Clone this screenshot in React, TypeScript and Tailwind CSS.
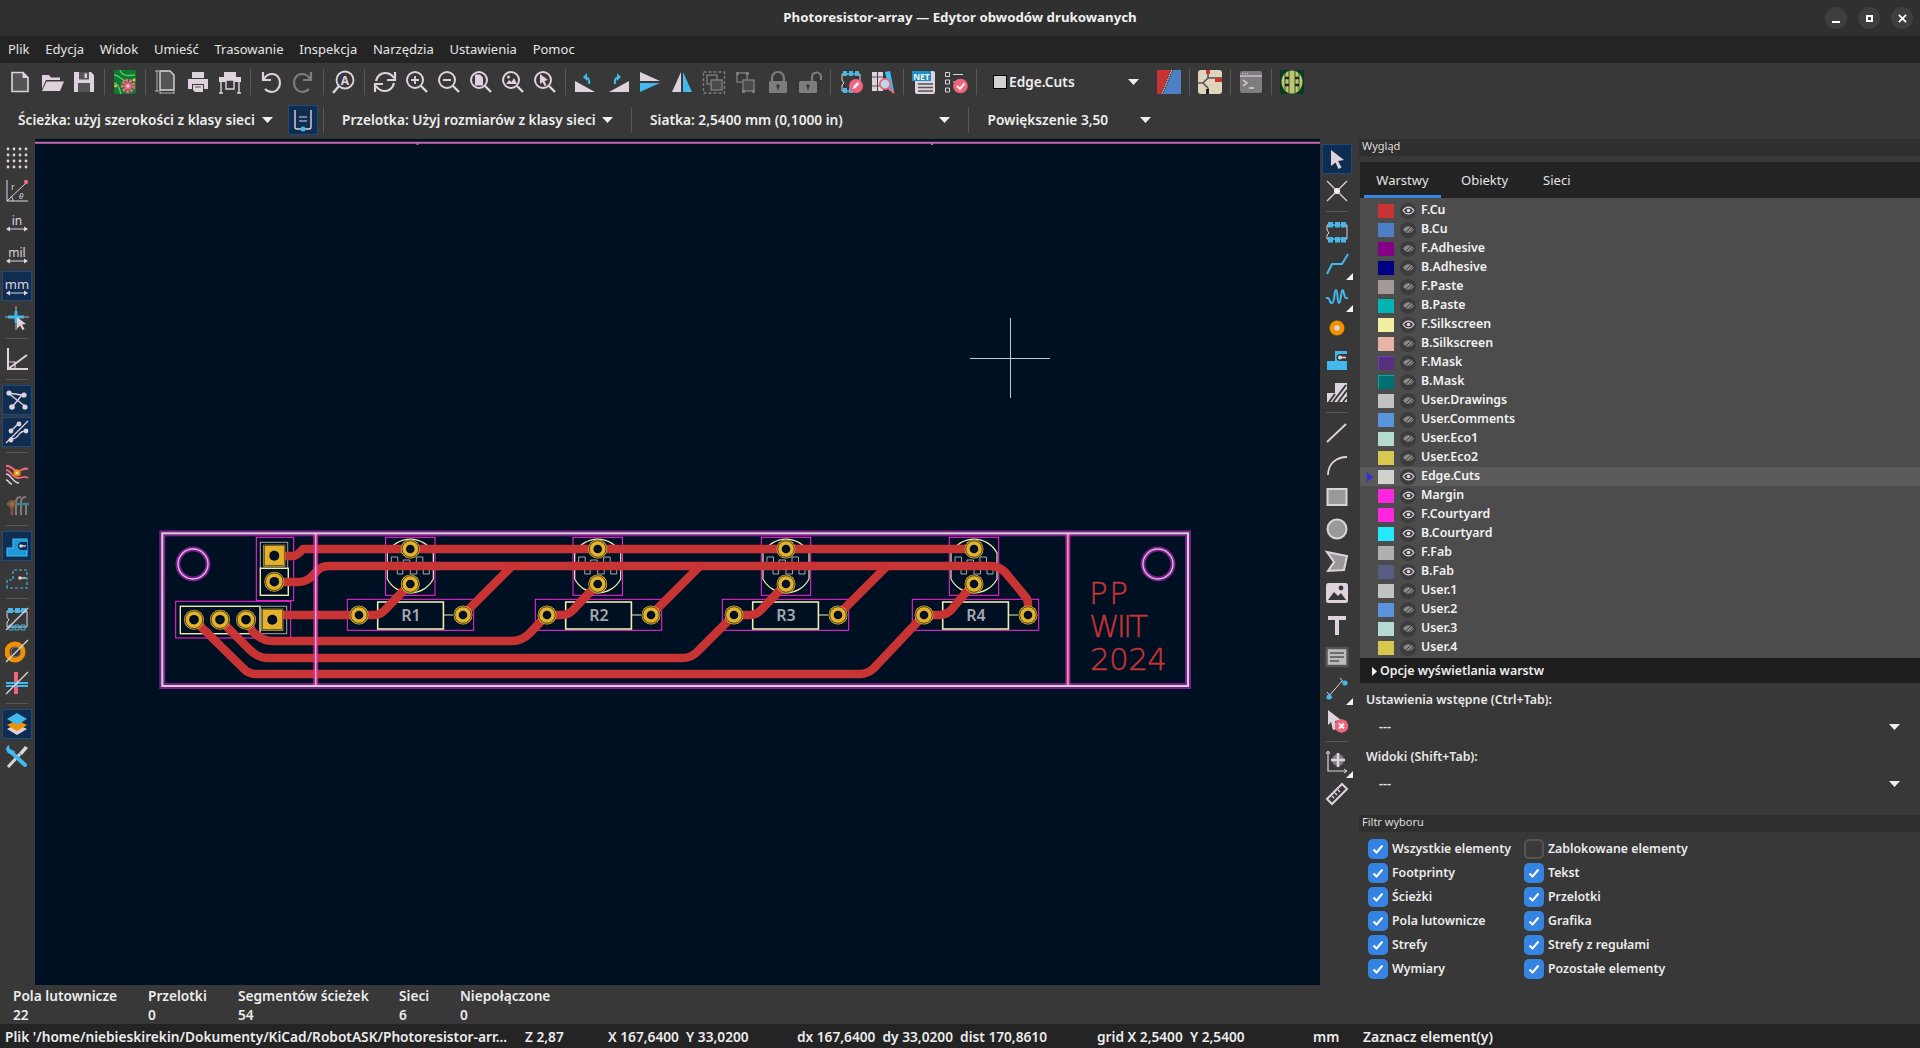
import type { ReactNode } from "react";

const L = "#ded3dd";
const B = "#42b8eb";
const R = "#f2647e";
const O = "#f29100";
const D = "#545454";
const G = "#7f7c80";

function Ic({ children }: { children: ReactNode }) {
  return (
    <svg viewBox="0 0 24 24" className="w-6 h-6" fill="none">
      {children}
    </svg>
  );
}

function Mag({ children, c = L }: { children?: ReactNode; c?: string }) {
  return (
    <Ic>
      <circle cx="10" cy="10" r="8" stroke={c} strokeWidth="2" />
      <path d="M16 16l6 6" stroke={c} strokeWidth="2.4" />
      {children}
    </Ic>
  );
}

function Btn({ children, active, tri }: { children: ReactNode; active?: boolean; tri?: boolean }) {
  return (
    <div className="relative w-8 h-8 flex items-center justify-center shrink-0">
      <div
        className={
          active
            ? "w-[30px] h-[30px] flex items-center justify-center border border-[#1f4a7d] bg-[#0f2d50]"
            : "w-[30px] h-[30px] flex items-center justify-center"
        }
      >
        {children}
      </div>
      {tri && (
        <svg viewBox="0 0 7 7" className="absolute right-0 bottom-0 w-[7px] h-[7px]">
          <path d="M7 0v7H0z" fill="#f2f2f2" />
        </svg>
      )}
    </div>
  );
}

function VSep() {
  return (
    <div className="w-[9px] h-8 flex items-center justify-center shrink-0">
      <div className="w-px h-[26px] bg-[#585858]" />
    </div>
  );
}

function HSep() {
  return (
    <div className="w-8 h-[9px] flex items-center justify-center shrink-0">
      <div className="h-px w-[22px] bg-[#585858]" />
    </div>
  );
}

function Caret() {
  return (
    <svg viewBox="0 0 11 6" className="w-[11px] h-[6px] shrink-0">
      <path d="M0 0h11L5.5 6z" fill="#f0f0f0" />
    </svg>
  );
}

/* ---------- top toolbar icons ---------- */
const IconNew = () => (
  <Ic>
    <path d="M4 2.5h11l5 5v14H4z" fill={D} stroke={L} strokeWidth="1.6" />
    <path d="M15 2.5v5h5" fill={L} stroke={L} strokeWidth="1" />
  </Ic>
);
const IconOpen = () => (
  <Ic>
    <path d="M2 19V5h7l2 2.5h9V10H6z" fill={L} />
    <path d="M6.5 11.5H24L20 21H2z" fill={L} />
  </Ic>
);
const IconSave = () => (
  <Ic>
    <path d="M2 2h17l3 3v17H2z" fill={L} />
    <rect x="7" y="2" width="10" height="7.5" fill={D} />
    <rect x="12.5" y="3.5" width="2.5" height="4.5" fill={L} />
    <rect x="6" y="13" width="12" height="9" fill={D} />
  </Ic>
);
const IconPcb = () => (
  <Ic>
    <rect x="1" y="0" width="22" height="24" rx="2" fill="#0e7a2e" />
    <path d="M1 5c6 0 7 6 13 6M7 0c2 6 7 6 15 5M1 13c4 0 5 5 7 11" stroke="#5cc46a" strokeWidth="1.4" />
    <circle cx="15" cy="16" r="5.5" fill="none" stroke={R} strokeWidth="3.4" strokeDasharray="2.6 1.2" />
    <circle cx="15" cy="16" r="3.6" fill={R} />
    <circle cx="15" cy="16" r="1.6" fill="#e8d8e0" />
    <circle cx="2.5" cy="16" r="1.4" fill="#e8c94c" />
    <circle cx="21" cy="10" r="1.4" fill="#e8c94c" />
  </Ic>
);
const IconPage = () => (
  <Ic>
    <path d="M1 1h4M1 21h4M3 1v20M6 23h14M6 21v3M20 21v3" stroke={L} strokeWidth="0.8" />
    <path d="M6 1h10l4 4v15H6z" fill={D} stroke={L} strokeWidth="1.4" />
  </Ic>
);
const IconPrint = () => (
  <Ic>
    <path d="M6 2h12v6H6z" fill={L} />
    <path d="M2 9h20v10h-4v-5H6v5H2z" fill={L} />
    <path d="M7 15h10v7H9l-2-2z" fill={L} />
    <path d="M9 17h6" stroke={D} strokeWidth="1" />
  </Ic>
);
const IconPlot = () => (
  <Ic>
    <path d="M6 2h12v5H6zM1 7h22v5H1z" fill={L} />
    <path d="M3 12v11M21 12v11M1 23h4M19 23h4" stroke={L} strokeWidth="1.4" />
    <path d="M8 10h8v9H8z" fill="#383838" stroke={L} strokeWidth="1.4" />
  </Ic>
);
const IconUndo = ({ c = L, flip }: { c?: string; flip?: boolean }) => (
  <Ic>
    <g transform={flip ? "matrix(-1 0 0 1 24 0)" : undefined} stroke={c} strokeWidth="2.2">
      <path d="M5 9c2-4 5-5 8-5 5 0 8 4 8 9s-4 9-8 9c-3 0-5-1-7-3" />
      <path d="M4 2v8h8" />
    </g>
  </Ic>
);
const IconFind = () => (
  <Ic>
    <circle cx="13" cy="10" r="8.5" stroke={L} strokeWidth="1.8" />
    <path d="M7 16L1 23" stroke={L} strokeWidth="2.4" />
    <text x="13" y="14.5" textAnchor="middle" fontSize="12" fontWeight="700" fill={L} fontFamily="Noto Sans">A</text>
  </Ic>
);
const IconRefresh = () => (
  <Ic>
    <path d="M3 11C4 6 8 3 12 3c4 0 7 2 9 5" stroke={L} strokeWidth="2.2" />
    <path d="M22 2v8h-8" stroke={L} strokeWidth="2.2" />
    <path d="M21 13c-1 5-5 8-9 8-4 0-7-2-9-5" stroke={L} strokeWidth="2.2" />
    <path d="M2 22v-8h8" stroke={L} strokeWidth="2.2" />
  </Ic>
);
const IconZoomIn = () => (
  <Mag>
    <path d="M6 10h8M10 6v8" stroke={L} strokeWidth="1.8" />
  </Mag>
);
const IconZoomOut = () => (
  <Mag>
    <path d="M6 10h8" stroke={L} strokeWidth="2" />
  </Mag>
);
const IconZoomFit = () => (
  <Mag>
    <path d="M6 4.5h5l3 3v8H6z" fill={L} />
  </Mag>
);
const IconZoomObj = () => (
  <Mag>
    <path d="M5 14l3-4 2.5 2L13 8l3 6z" fill={L} />
    <circle cx="7.5" cy="7" r="1.5" fill={L} />
  </Mag>
);
const IconZoomSel = () => (
  <Mag>
    <path d="M7 4l8 6-3.5 1 2 4-2 1-2-4L7 14z" fill={L} />
  </Mag>
);
const IconFlipL = () => (
  <Ic>
    <path d="M1 22V11l20 11z" fill={L} />
    <path d="M15 14c1-4-1-7-4-7" stroke={B} strokeWidth="2.2" />
    <path d="M13 3l-4 4 4 4z" fill={B} />
  </Ic>
);
const IconFlipR = () => (
  <Ic>
    <path d="M23 22V11L3 22z" fill={L} />
    <path d="M9 14c-1-4 1-7 4-7" stroke={B} strokeWidth="2.2" />
    <path d="M11 3l4 4-4 4z" fill={B} />
  </Ic>
);
const IconFlipV = () => (
  <Ic>
    <path d="M2 2l20 9H2z" fill={L} />
    <path d="M2 13h20L2 22z" fill={B} />
  </Ic>
);
const IconMirror = () => (
  <Ic>
    <path d="M11 2v20H2z" fill={L} />
    <path d="M13 2v20h9z" fill={B} />
  </Ic>
);
const IconGroup = () => (
  <Ic>
    <rect x="1.5" y="2" width="21" height="21" stroke={G} strokeWidth="1.4" strokeDasharray="3 2" />
    <rect x="5" y="5" width="10" height="9" stroke={G} strokeWidth="1.4" />
    <rect x="9" y="10" width="11" height="10" fill="#4a4a4a" stroke={G} strokeWidth="1.4" />
  </Ic>
);
const IconUngroup = () => (
  <Ic>
    <rect x="3" y="3" width="10" height="9" stroke={G} strokeWidth="1.4" />
    <rect x="9" y="10" width="11" height="11" fill="#4a4a4a" stroke={G} strokeWidth="1.4" />
    <path d="M2 2h3v3H2zM12 2h3v3h-3zM18 20h3v3h-3zM8 20h3v3H8z" fill={G} />
  </Ic>
);
const IconLock = () => (
  <Ic>
    <path d="M6 12V8a6 6 0 0 1 12 0v4" stroke={G} strokeWidth="2.2" />
    <rect x="3" y="11" width="18" height="12" rx="1.5" fill={G} />
    <circle cx="12" cy="16" r="1.8" fill="#3a3a3a" />
    <path d="M12 16v4" stroke="#3a3a3a" strokeWidth="1.4" />
  </Ic>
);
const IconUnlock = () => (
  <Ic>
    <path d="M14 12V7a4.5 4.5 0 0 1 9 0v3" stroke={G} strokeWidth="2.2" />
    <rect x="1" y="11" width="18" height="12" rx="1.5" fill={G} />
    <circle cx="10" cy="16" r="1.8" fill="#3a3a3a" />
    <path d="M10 16v4" stroke="#3a3a3a" strokeWidth="1.4" />
  </Ic>
);
const IconFpEdit = () => (
  <Ic>
    <path d="M3 4h18v17H3v-6l2-2-2-3z" stroke={L} strokeWidth="1" />
    <path d="M4 1h4v5H4zM10 1h4v5h-4zM16 1h4v5h-4zM4 18h4v5H4zM10 18h4v5h-4z" fill={B} />
    <circle cx="17" cy="16" r="7" fill={R} />
    <path d="M13.5 19l1-3 4-4 2 2-4 4z" fill="#f4f0f2" />
  </Ic>
);
const IconLib = () => (
  <Ic>
    <rect x="1" y="2" width="5" height="19" fill={L} />
    <rect x="7" y="2" width="5" height="19" fill={L} />
    <path d="M1 7h11M1 16h11" stroke={D} strokeWidth="1" />
    <path d="M14 2l5-1 4 20h-5z" fill={B} />
    <circle cx="14" cy="14" r="5.2" fill="#b8dbe8" stroke={R} strokeWidth="1.8" />
    <path d="M18 18l5 5" stroke={R} strokeWidth="2.4" />
  </Ic>
);
const IconNet = () => (
  <Ic>
    <rect x="3" y="1" width="20" height="23" rx="2" fill={L} />
    <rect x="0" y="1" width="19" height="10" fill="#1d8fc4" />
    <text x="9.5" y="9.5" textAnchor="middle" fontSize="8.5" fontWeight="700" fill="#f4f4f4" fontFamily="Noto Sans">NET</text>
    <path d="M6 14h15M6 17.5h15M6 21h15" stroke={D} strokeWidth="1.6" />
  </Ic>
);
const IconCheck = () => (
  <Ic>
    <path d="M1.5 2.5h4v4h-4zM1.5 10h4v4h-4zM1.5 18h4v4h-4z" stroke={L} strokeWidth="1" />
    <path d="M9 4.5h10M9 12h5" stroke={L} strokeWidth="1.2" />
    <circle cx="16.5" cy="16" r="7.3" fill={R} />
    <path d="M13 16l3 3 4.5-5.5" stroke="#f6f2f4" strokeWidth="2" />
  </Ic>
);
const IconLayerPair = () => (
  <Ic>
    <path d="M0 0h14L4 24H0z" fill="#c83434" />
    <path d="M16 0h8v24H6z" fill="#4d7fc4" />
    <path d="M14.8 0L5 24" stroke="#f0f0f0" strokeWidth="1" strokeDasharray="1.6 0.8" />
  </Ic>
);
const IconSchem = () => (
  <Ic>
    <rect x="0" y="0" width="24" height="24" rx="3" fill="#e0d4bd" />
    <path d="M10 0v8M10 8L5 13l5 5M10 18v6M5 13h-5M10 8l14 0" stroke="#545454" strokeWidth="1.6" />
    <path d="M8 0h4v4H8zM17 8h7v4h-7z" fill="#c83434" />
    <path d="M8 19h3v5H8z" fill="#222" />
  </Ic>
);
const IconTerm = () => (
  <Ic>
    <rect x="1" y="1" width="22" height="22" rx="2" fill={G} />
    <path d="M1 6h22" stroke={L} strokeWidth="1.2" />
    <path d="M3 3.5h1M5.5 3.5h1M8 3.5h1" stroke={L} strokeWidth="1" />
    <path d="M4 10l4 3-4 3M10 18h5" stroke={L} strokeWidth="1.4" />
  </Ic>
);
const Icon3D = () => (
  <Ic>
    <rect x="0" y="0" width="24" height="24" fill="#0b3a22" />
    <ellipse cx="12" cy="12" rx="10.5" ry="11.5" fill="#c8c06c" />
    <path d="M5 3v18M9 1v22M15 1v22M19 3v18" stroke="#0b6a3a" strokeWidth="1" />
    <path d="M5 8h4M15 8h4M5 15h4M15 15h4" stroke="#222" strokeWidth="2.4" />
  </Ic>
);

/* ---------- left toolbar icons ---------- */
const IconGrid = () => (
  <Ic>
    {[3, 9, 15, 21].map((y) =>
      [3, 9, 15, 21].map((x) => <circle key={`${x}-${y}`} cx={x} cy={y} r="1.4" fill={L} />)
    )}
  </Ic>
);
const IconPolar = () => (
  <Ic>
    <path d="M2 23V2M2 23h21M2 23L21 5" stroke={L} strokeWidth="1" />
    <path d="M6 18c1 1 2 3 2 5" stroke={L} strokeWidth="1" />
    <circle cx="21" cy="4" r="2.2" fill={R} />
    <text x="6" y="12" fontSize="9" fill={L} fontFamily="Noto Sans">r</text>
    <text x="14" y="21" fontSize="8" fontStyle="italic" fill={L} fontFamily="Noto Sans">θ</text>
  </Ic>
);
const Unit = ({ t, s = 12 }: { t: string; s?: number }) => (
  <Ic>
    <text x="12" y="14.5" textAnchor="middle" fontSize={s} fill={L} fontFamily="Noto Sans">{t}</text>
    <path d="M2 19h20" stroke={L} strokeWidth="1" />
    <path d="M1 19l4-2.4v4.8zM23 19l-4-2.4v4.8z" fill={L} />
  </Ic>
);
const IconCursor = () => (
  <Ic>
    <path d="M0 11h24M11 0v24" stroke={L} strokeWidth="0.8" />
    <path d="M3 11h16M11 5v12" stroke={B} strokeWidth="2.8" />
    <path d="M12 11l9 7-4 .6 2.5 4.5-2 1-2.4-4.6L12 23z" fill={L} />
  </Ic>
);
const IconOrigin = () => (
  <Ic>
    <path d="M3 1v21h20" stroke={L} strokeWidth="2" />
    <path d="M3 22L22 8" stroke={L} strokeWidth="2" />
    <path d="M3 15h7v7" stroke={L} strokeWidth="1.2" />
  </Ic>
);
const IconRats = () => (
  <Ic>
    <path d="M3 5l14 2M3 5l18 14M17 7L7 19" stroke={L} strokeWidth="1.4" />
    <circle cx="4" cy="5" r="2.6" fill={L} />
    <circle cx="19" cy="7" r="2.6" fill={L} />
    <circle cx="7" cy="19" r="2.8" fill={L} />
    <circle cx="20" cy="19" r="2.6" fill={L} />
  </Ic>
);
const IconCurved = () => (
  <Ic>
    <path d="M6 19c10 0 5-8 15-8" stroke={L} strokeWidth="1.4" />
    <path d="M14 3L5 12" stroke={L} strokeWidth="1.4" />
    <path d="M1 23L23 1" stroke={L} strokeWidth="1.2" />
    <circle cx="14" cy="4" r="2.4" fill={L} />
    <circle cx="6" cy="11" r="2.4" fill={L} />
    <circle cx="21" cy="11" r="2.4" fill={L} />
    <circle cx="6" cy="20" r="2.4" fill={L} />
  </Ic>
);
const IconNetMode = () => (
  <Ic>
    <path d="M1 5c6-1 6 5 12 5 4 0 6-4 10-2" stroke={R} strokeWidth="2.2" />
    <path d="M1 9c5 0 6 8 12 8 4 0 6-3 10 0" stroke={R} strokeWidth="1.8" />
    <path d="M1 13c5 0 7 9 13 9M1 19c3 0 3 4 6 4" stroke={L} strokeWidth="1.4" />
    <circle cx="12" cy="12" r="3.6" fill={O} />
    <circle cx="12" cy="12" r="1.4" fill={L} />
  </Ic>
);
const IconViaMode = () => (
  <Ic>
    <path d="M11 22V9c0-3 2-5 5-5M16 22V9c0-3 2-5 5-5" stroke={G} strokeWidth="2" />
    <path d="M21 22V10" stroke={G} strokeWidth="2" />
    <path d="M7 22V11" stroke="#8a4a44" strokeWidth="3" />
    <path d="M2 11h22" stroke="#3f7f9a" strokeWidth="2.4" />
    <circle cx="7" cy="11" r="4" fill="#8a5a2c" />
    <circle cx="7" cy="11" r="1.6" fill={G} />
  </Ic>
);
const IconZone = () => (
  <Ic>
    <path d="M2 22v-8h6V5h14v17z" fill="#1f9ad6" stroke={B} strokeWidth="1.2" />
    <path d="M22 8h-5a3.5 3.5 0 0 0 0 8h5z" fill="#0f2d50" />
    <circle cx="16" cy="12" r="1.8" fill={L} />
    <path d="M16 12h5" stroke={L} strokeWidth="1.4" />
  </Ic>
);
const IconZoneOutline = () => (
  <Ic>
    <path d="M2 22v-8h6V4h14v18z" stroke={B} strokeWidth="1.2" strokeDasharray="3 2" />
    <circle cx="15" cy="12" r="1.8" fill={L} />
    <path d="M15 12h6" stroke={L} strokeWidth="1.4" />
  </Ic>
);
const IconFpText = () => (
  <Ic>
    <path d="M2 4h20v16H2v-5l2-2-2-3z" stroke={L} strokeWidth="1" />
    <path d="M3 1h5v5H3zM10 1h5v5h-5zM16 1h5v5h-5z" fill={B} />
    <path d="M4 18h4v5H4zM10 18h4v5h-4zM16 18h4v5h-4z" stroke={B} strokeWidth="1" />
    <path d="M1 23L23 1" stroke={L} strokeWidth="1.2" />
  </Ic>
);
const IconViaHide = () => (
  <Ic>
    <circle cx="10" cy="13" r="8" stroke={O} strokeWidth="5" />
    <circle cx="11" cy="13" r="5" stroke={G} strokeWidth="1" />
    <path d="M1 23L23 1" stroke={L} strokeWidth="1.2" />
  </Ic>
);
const IconTrackHide = () => (
  <Ic>
    <path d="M11 1v22" stroke={R} strokeWidth="4" />
    <path d="M1 12h22M1 15h22" stroke={B} strokeWidth="2" />
    <path d="M1 23L23 1" stroke={L} strokeWidth="1.2" />
  </Ic>
);
const IconLayers = () => (
  <Ic>
    <path d="M12 12l10 5-10 6-10-6z" fill={L} />
    <path d="M12 8l10 5-10 6-10-6z" fill={O} />
    <path d="M12 1l10 6-10 6L2 7z" fill={B} />
  </Ic>
);
const IconTools = () => (
  <Ic>
    <path d="M3 23L15 10" stroke={L} strokeWidth="3" />
    <path d="M14 9l6-7 3 2-6 7z" fill={L} />
    <path d="M5 7l15 14" stroke={B} strokeWidth="4" strokeLinecap="round" />
    <path d="M4 1a5.5 5.5 0 0 0-3 4 6 6 0 0 0 8 5l1-3-5-1z" fill={B} />
  </Ic>
);

/* ---------- right toolbar icons ---------- */
const IconPointer = () => (
  <Ic>
    <path d="M6 3l13 10-6 1 3.5 6.5-3 1.5-3-6.5L6 19z" fill={L} />
  </Ic>
);
const IconPin = () => (
  <Ic>
    <path d="M2 2l20 20M22 2L2 22" stroke={L} strokeWidth="1.2" />
    <circle cx="12" cy="12" r="3" fill="#f4f0f2" />
  </Ic>
);
const IconFootprint = () => (
  <Ic>
    <path d="M2 5h20v14H2v-4l2-2-2-3z" stroke={L} strokeWidth="1" />
    <path d="M3 2h5v5.5H3zM10 2h5v5.5h-5zM16 2h5v5.5h-5zM3 17h5v5.5H3zM10 17h5v5.5h-5zM16 17h5v5.5h-5z" fill={B} />
  </Ic>
);
const IconRoute = () => (
  <Ic>
    <path d="M2 22l5-10h10l6-10" stroke={B} strokeWidth="2" />
  </Ic>
);
const IconTune = () => (
  <Ic>
    <path d="M1 14h2c2 0 1 5 4 5s2-13 4-13 1 13 3 13 2-13 3.5-13S19 14 21 14h2" stroke={B} strokeWidth="2" />
  </Ic>
);
const IconVia = () => (
  <Ic>
    <circle cx="12" cy="12" r="7.5" fill={O} />
    <circle cx="12" cy="12" r="2.8" fill={L} />
  </Ic>
);
const IconZoneSolid = () => (
  <Ic>
    <path d="M2 22v-9h8V3h12v19z" fill={B} />
    <path d="M22 6h-7a3.5 3.5 0 0 0 0 7h7z" fill="#383838" />
    <circle cx="15" cy="9.5" r="2" fill={L} />
    <path d="M15 9.5h6" stroke={L} strokeWidth="1.6" />
  </Ic>
);
const IconRule = () => (
  <Ic>
    <path d="M2 22v-9h8V3h12v19z" fill={L} />
    <path d="M4 22l6-8M8 22l13-17M13 22l9-12M18 22l4-5" stroke="#383838" strokeWidth="2" />
  </Ic>
);
const IconLine = () => (
  <Ic>
    <path d="M2 21L21 3" stroke={L} strokeWidth="1.8" />
  </Ic>
);
const IconArc = () => (
  <Ic>
    <path d="M3 22C3 11 11 4 22 4" stroke={L} strokeWidth="1.8" />
  </Ic>
);
const IconRect = () => (
  <Ic>
    <rect x="2.5" y="4" width="19" height="16" fill="#999" stroke={L} strokeWidth="2" />
  </Ic>
);
const IconCircle = () => (
  <Ic>
    <circle cx="12" cy="12" r="9.5" fill="#999" stroke={L} strokeWidth="2" />
  </Ic>
);
const IconPoly = () => (
  <Ic>
    <path d="M2 3l20 4-3 14-16 1 6-9z" fill="#999" stroke={L} strokeWidth="2" />
  </Ic>
);
const IconImage = () => (
  <Ic>
    <rect x="1" y="2" width="22" height="20" rx="2.5" fill={L} />
    <path d="M3 19l6-8 4 4 3-3 5 7z" fill="#383838" />
    <circle cx="16" cy="7" r="2.4" fill="#383838" />
  </Ic>
);
const IconT = () => (
  <Ic>
    <path d="M3 3h18v4h-7v15h-4V7H3z" fill={L} />
  </Ic>
);
const IconTextBox = () => (
  <Ic>
    <rect x="1.5" y="3" width="21" height="18" fill="#bbb" stroke={D} strokeWidth="2.4" />
    <path d="M5 8h14M5 12h14M5 16h9" stroke={D} strokeWidth="1.4" />
  </Ic>
);
const IconDim = () => (
  <Ic>
    <path d="M4 19L17 4M2 15l5 6M15 1l5 6" stroke={L} strokeWidth="1" />
    <circle cx="20" cy="6" r="2.6" fill={B} />
    <circle cx="4" cy="20" r="2.6" fill={B} />
  </Ic>
);
const IconDelete = () => (
  <Ic>
    <path d="M3 1l13 10-6 1 2 8-4 1-2-8-3 3z" fill={L} />
    <circle cx="16.5" cy="17" r="6.8" fill={R} />
    <path d="M14 14.5l5 5M19 14.5l-5 5" stroke="#f6f2f4" strokeWidth="2" />
  </Ic>
);
const IconOrigin2 = () => (
  <Ic>
    <path d="M3 1v20h19" stroke={L} strokeWidth="1.2" />
    <path d="M1 4l2-3 2 3M19 19l3 2-3 2" stroke={L} strokeWidth="1" />
    <circle cx="13" cy="10" r="6" fill={G} />
    <path d="M6 10h14M13 3v14" stroke={L} strokeWidth="2.6" />
  </Ic>
);
const IconMeasure = () => (
  <Ic>
    <path d="M2 17L17 2l5 5L7 22z" stroke={L} strokeWidth="2" />
    <path d="M7 14l2 2M10 11l2 2M13 8l2 2" stroke={L} strokeWidth="1.4" />
  </Ic>
);

/* ---------- PCB ---------- */
const GOLD = "#e3b12c";
const BG = "#001023";
const TRACK = "#c83434";
const SILK = "#efebb4";
const COURT = "#ff26e2";

function Pad({ x, y, r = 10 }: { x: number; y: number; r?: number }) {
  return (
    <g>
      <circle cx={x} cy={y} r={r} fill={GOLD} />
      <circle cx={x} cy={y} r={r - 1.2} fill="none" stroke={BG} strokeWidth="0.7" />
      <circle cx={x} cy={y} r={r - 5.2} fill={BG} />
    </g>
  );
}

function SquarePad({ x, y }: { x: number; y: number }) {
  return (
    <g>
      <rect x={x - 11} y={y - 11} width="22" height="22" fill={GOLD} />
      <rect x={x - 10} y={y - 10} width="20" height="20" fill="none" stroke={BG} strokeWidth="0.5" />
      <circle cx={x} cy={y} r="5" fill={BG} />
    </g>
  );
}

function Resistor({ x, name }: { x: number; name: string }) {
  return (
    <g>
      <rect x={x - 11.7} y="599.3" width="126.4" height="31" stroke={COURT} strokeWidth="1" />
      <path d={`M${x + 84} 615h10`} stroke={SILK} strokeWidth="1" />
      <rect x={x + 18.7} y="602" width="65.7" height="27" stroke={SILK} strokeWidth="1.6" />
      <text x={x + 52} y="620.5" textAnchor="middle" fontSize="16" fontWeight="600" fill="#a4a8ae" fontFamily="Noto Sans">
        {name}
      </text>
    </g>
  );
}

function Sensor({ x }: { x: number }) {
  return (
    <g transform={`translate(${x} 549)`}>
      <rect x="-24.7" y="-11.7" width="49.4" height="58" stroke={COURT} strokeWidth="1" />
      <path d="M-23 4A26 26 0 0 1 23 4V30A26 26 0 0 1-23 30Z" stroke={SILK} strokeWidth="1.2" />
      <path
        d="M-19 8h6.5v10M-19 8v10M-13 25v-7h5.500v7M-7 11h6.5v7h-6.5zM0 25v-7h6.5v7M6 8h6.5v10h-6.5zM13 25v-7h6v7h-6M-13 25h5.500M0 25h6.5"
        stroke="#a4a8ae"
        strokeWidth="1"
      />
    </g>
  );
}

function Board() {
  const tracks = [
    "M274 556H293Q297 556 303 549H974",
    "M274 582H298Q305 582 310 578L318 570Q322 566 330 566H990Q999 566 1005 572L1024 595Q1028 599 1028 604V615",
    "M463 615L512 566",
    "M651 615L700 566",
    "M838 615L887 566",
    "M359 615H374Q380 615 385 610L404 590L410 584",
    "M547 615H562Q568 615 573 610L592 590L598 584",
    "M734 615H750Q756 615 761 610L780 590L786 584",
    "M924 615H940Q946 615 951 610L968 590L974 584",
    "M272 615H359",
    "M246 620L253 632Q262 641 272 641H512Q522 641 530 633L547 615",
    "M220 620L249 649Q258 658 268 658H683Q692 658 699 650L734 615",
    "M194 620L243 668Q248 674 256 674H860Q868 674 874 668L924 615",
  ];
  return (
    <svg viewBox="35 139 1285 846" className="w-full h-full block" fill="none">
      <path d="M35 142.8H1320M417.5 142v3M932 142v3" stroke="#c568ad" strokeWidth="2" />
      {/* mask layer under the outline */}
      <rect x="162.3" y="533.3" width="1025.7" height="152.7" stroke="#7c1f8c" strokeWidth="6" />
      <circle cx="193" cy="564" r="15" stroke="#7c1f8c" strokeWidth="5" />
      <circle cx="1158" cy="564" r="15" stroke="#7c1f8c" strokeWidth="5" />
      <Resistor x={359} name="R1" />
      <Resistor x={547} name="R2" />
      <Resistor x={734} name="R3" />
      <Resistor x={924} name="R4" />
      <Sensor x={410.3} />
      <Sensor x={597.7} />
      <Sensor x={786} />
      <Sensor x={974} />
      {/* connectors */}
      <rect x="256.3" y="537.3" width="37.4" height="63.4" stroke={COURT} strokeWidth="1" />
      <rect x="260.3" y="542.3" width="27.4" height="26" stroke="#a4a8ae" strokeWidth="1" />
      <rect x="260.3" y="568.3" width="28" height="27" stroke={SILK} strokeWidth="1.4" />
      <rect x="175.7" y="601.3" width="115" height="36.7" stroke={COURT} strokeWidth="1" />
      <rect x="180.3" y="606.3" width="79.7" height="27.4" stroke={SILK} strokeWidth="1.4" />
      <rect x="260" y="606.3" width="26.7" height="27.4" stroke="#a4a8ae" strokeWidth="1" />
      {tracks.map((d) => (
        <path key={d} d={d} stroke={TRACK} strokeWidth="8.4" strokeLinejoin="round" strokeLinecap="round" />
      ))}
      {/* edge cuts */}
      <path d="M315.7 533V686M1067.9 533V686" stroke="#e22f9c" strokeOpacity="0.75" strokeWidth="5" />
      <path d="M315.7 533V686M1067.9 533V686" stroke="#e9a8d8" strokeWidth="1.4" />
      <rect x="162.3" y="533.3" width="1025.7" height="152.7" stroke="#d0d2cd" strokeWidth="2" />
      <circle cx="193" cy="564" r="15" stroke="#d8b8d8" strokeWidth="1.4" />
      <circle cx="1158" cy="564" r="15" stroke="#d8b8d8" strokeWidth="1.4" />
      {/* pads */}
      <SquarePad x={274.3} y={555.7} />
      <Pad x={274.3} y={581.7} />
      <SquarePad x={272.3} y={619.7} />
      <Pad x={246} y={619.7} />
      <Pad x={220} y={619.7} />
      <Pad x={194} y={619.7} />
      {[410.3, 597.7, 786, 974].map((x) => (
        <g key={x}>
          <Pad x={x} y={549} r={9.5} />
          <Pad x={x} y={584} r={9.5} />
        </g>
      ))}
      {[359, 463, 547, 651, 734, 838, 924, 1028].map((x) => (
        <Pad key={x} x={x} y={615} r={9.5} />
      ))}
      {/* board label */}
      <g fill={TRACK} stroke={TRACK} strokeWidth="0.4" fontFamily="DejaVu Sans" fontWeight="200" fontSize="31">
        <text x="1089" y="603.5" textLength="39" lengthAdjust="spacing">PP</text>
        <text x="1089" y="636.7" textLength="59" lengthAdjust="spacing">WIIT</text>
        <text x="1090" y="670" textLength="77" lengthAdjust="spacing">2024</text>
      </g>
      {/* cursor */}
      <path d="M970 358.5H1050M1010.5 318V398" stroke="#c8c8c8" strokeWidth="1" />
    </svg>
  );
}

/* ---------- right panel ---------- */
const layers: [string, string, boolean][] = [
  ["F.Cu", "#c83434", true],
  ["B.Cu", "#4d7fc4", false],
  ["F.Adhesive", "#840084", false],
  ["B.Adhesive", "#000084", false],
  ["F.Paste", "#a39a95", false],
  ["B.Paste", "#00b4b4", false],
  ["F.Silkscreen", "#f2eda1", true],
  ["B.Silkscreen", "#e8b2a7", false],
  ["F.Mask", "#54307f", false],
  ["B.Mask", "#006f73", false],
  ["User.Drawings", "#c2c2c2", false],
  ["User.Comments", "#5994dc", false],
  ["User.Eco1", "#b4dbd2", false],
  ["User.Eco2", "#d8c852", false],
  ["Edge.Cuts", "#d0d2cd", true],
  ["Margin", "#ff26e2", true],
  ["F.Courtyard", "#ff26e2", true],
  ["B.Courtyard", "#26e9ff", true],
  ["F.Fab", "#afafaf", true],
  ["B.Fab", "#585d84", true],
  ["User.1", "#c2c2c2", false],
  ["User.2", "#5994dc", false],
  ["User.3", "#b4dbd2", false],
  ["User.4", "#d8c852", false],
];

function Eye({ on }: { on: boolean }) {
  return (
    <div className="w-4 h-4 rounded-full bg-[#3c3c3c] flex items-center justify-center">
      <svg viewBox="0 0 14 10" className="w-[13px] h-[9px]" fill="none">
        {on ? (
          <g>
            <path d="M1 5c3-5 9-5 12 0-3 5-9 5-12 0z" stroke="#ded3dd" strokeWidth="1.2" />
            <circle cx="7" cy="5" r="2" fill="#ded3dd" />
          </g>
        ) : (
          <g>
            <path d="M1 5c3-5 9-5 12 0-3 5-9 5-12 0z" fill="#8a8a8a" />
            <path d="M2 10l9-9M6 10l7-7" stroke="#3c3c3c" strokeWidth="1.1" />
          </g>
        )}
      </svg>
    </div>
  );
}

function Check({ label, on = true }: { label: string; on?: boolean }) {
  return (
    <div className="flex items-center h-6">
      <div
        className={
          on
            ? "w-5 h-5 rounded-[5px] bg-[#3584e4] flex items-center justify-center"
            : "w-5 h-5 rounded-[5px] border-2 border-[#555] bg-[#3a3a3a]"
        }
      >
        {on && (
          <svg viewBox="0 0 14 14" className="w-[14px] h-[14px]" fill="none">
            <path d="M2.5 7.5l3 3 6-7" stroke="#fff" strokeWidth="2" />
          </svg>
        )}
      </div>
      <span className="ml-1 text-[12.3px] font-semibold text-[#ececec] whitespace-nowrap">{label}</span>
    </div>
  );
}

function Combo({ w, ml, text }: { w: string; ml: string; text: string }) {
  return (
    <div className={`${w} ${ml} flex items-center justify-between shrink-0`}>
      <span className="whitespace-nowrap">{text}</span>
      <Caret />
    </div>
  );
}

export default function App() {
  const menus = ["Plik", "Edycja", "Widok", "Umieść", "Trasowanie", "Inspekcja", "Narzędzia", "Ustawienia", "Pomoc"];
  const stats = [
    ["Pola lutownicze", "22", "w-[135px]"],
    ["Przelotki", "0", "w-[90px]"],
    ["Segmentów ścieżek", "54", "w-[161px]"],
    ["Sieci", "6", "w-[61px]"],
    ["Niepołączone", "0", "w-[100px]"],
  ];

  return (
    <div className="w-[1920px] h-[1048px] flex flex-col overflow-hidden bg-[#383838] text-[#eeeeee] font-['Noto_Sans',sans-serif]">
      {/* title bar */}
      <div className="relative h-9 shrink-0 bg-[#303030] flex items-center justify-center text-[13.25px] font-bold text-[#f0f0f0]">
        Photoresistor-array — Edytor obwodów drukowanych
        <div className="absolute right-[7px] top-[7px] flex gap-[11px]">
          <div className="w-[22px] h-[22px] rounded-full bg-[#3e3e3e] flex items-end justify-center pb-[6px]">
            <div className="w-2 h-[2px] bg-white" />
          </div>
          <div className="w-[22px] h-[22px] rounded-full bg-[#3e3e3e] flex items-center justify-center">
            <div className="w-[7px] h-[7px] border-2 border-white" />
          </div>
          <div className="w-[22px] h-[22px] rounded-full bg-[#3e3e3e] flex items-center justify-center">
            <svg viewBox="0 0 10 10" className="w-[9px] h-[9px]">
              <path d="M1 1l8 8M9 1l-8 8" stroke="#fff" strokeWidth="2" />
            </svg>
          </div>
        </div>
      </div>

      {/* menu bar */}
      <div className="h-[27px] shrink-0 bg-[#242424] flex items-center gap-[15.8px] pl-2 text-[13px] text-[#e4e4e4]">
        {menus.map((m) => (
          <span key={m}>{m}</span>
        ))}
      </div>

      {/* main toolbar */}
      <div className="h-[38px] shrink-0 flex items-center pl-1 bg-[#383838]">
        <Btn><IconNew /></Btn>
        <Btn><IconOpen /></Btn>
        <Btn><IconSave /></Btn>
        <VSep />
        <Btn><IconPcb /></Btn>
        <VSep />
        <Btn><IconPage /></Btn>
        <Btn><IconPrint /></Btn>
        <Btn><IconPlot /></Btn>
        <VSep />
        <Btn><IconUndo /></Btn>
        <Btn><IconUndo c={G} flip /></Btn>
        <VSep />
        <Btn><IconFind /></Btn>
        <VSep />
        <Btn><IconRefresh /></Btn>
        <Btn><IconZoomIn /></Btn>
        <Btn><IconZoomOut /></Btn>
        <Btn><IconZoomFit /></Btn>
        <Btn><IconZoomObj /></Btn>
        <Btn><IconZoomSel /></Btn>
        <VSep />
        <Btn><IconFlipL /></Btn>
        <Btn><IconFlipR /></Btn>
        <Btn><IconFlipV /></Btn>
        <Btn><IconMirror /></Btn>
        <Btn><IconGroup /></Btn>
        <Btn><IconUngroup /></Btn>
        <Btn><IconLock /></Btn>
        <Btn><IconUnlock /></Btn>
        <VSep />
        <Btn><IconFpEdit /></Btn>
        <Btn><IconLib /></Btn>
        <VSep />
        <Btn><IconNet /></Btn>
        <Btn><IconCheck /></Btn>
        <VSep />
        <div className="w-[172px] shrink-0 flex items-center pl-3 pr-[14px] text-[13.7px] font-semibold">
          <div className="w-[14px] h-[14px] bg-[#d0d2cd] border border-black" />
          <span className="ml-[2px]">Edge.Cuts</span>
          <div className="ml-auto">
            <Caret />
          </div>
        </div>
        <Btn><IconLayerPair /></Btn>
        <VSep />
        <Btn><IconSchem /></Btn>
        <VSep />
        <Btn><IconTerm /></Btn>
        <VSep />
        <Btn><Icon3D /></Btn>
      </div>

      {/* secondary toolbar */}
      <div className="h-[38px] shrink-0 flex items-center pl-[18px] text-[13.7px] font-semibold bg-[#383838]">
        <Combo w="w-[254.5px]" ml="ml-0" text="Ścieżka: użyj szerokości z klasy sieci" />
        <div className="ml-[14.5px]">
          <Btn active>
            <svg viewBox="0 0 24 24" className="w-6 h-6" fill="none">
              <path d="M4 2v17q0 2 2 2h12q2 0 2-2V2" stroke="#ded3dd" strokeWidth="1.4" />
              <path d="M8 9h8M8 13h8" stroke="#ded3dd" strokeWidth="1.2" />
              <circle cx="12" cy="21" r="2.5" fill="#42b8eb" />
            </svg>
          </Btn>
        </div>
        <VSep />
        <Combo w="w-[270.5px]" ml="ml-[14px]" text="Przelotka: Użyj rozmiarów z klasy sieci" />
        <div className="ml-[14px]"><VSep /></div>
        <Combo w="w-[300px]" ml="ml-[14.5px]" text="Siatka: 2,5400 mm (0,1000 in)" />
        <div className="ml-[14px]"><VSep /></div>
        <Combo w="w-[163px]" ml="ml-[14.5px]" text="Powiększenie 3,50" />
      </div>

      {/* body */}
      <div className="h-[885px] shrink-0 flex">
        <div className="w-[1358px] shrink-0 flex flex-col">
          <div className="h-[846px] shrink-0 flex">
            {/* left toolbar */}
            <div className="w-[35px] shrink-0 flex flex-col pt-[3px] pl-px">
              <Btn><IconGrid /></Btn>
              <Btn><IconPolar /></Btn>
              <Btn><Unit t="in" /></Btn>
              <Btn><Unit t="mil" /></Btn>
              <Btn active><Unit t="mm" s={13} /></Btn>
              <Btn><IconCursor /></Btn>
              <HSep />
              <Btn><IconOrigin /></Btn>
              <HSep />
              <Btn active><IconRats /></Btn>
              <Btn active><IconCurved /></Btn>
              <HSep />
              <Btn><IconNetMode /></Btn>
              <Btn><IconViaMode /></Btn>
              <HSep />
              <Btn active><IconZone /></Btn>
              <Btn><IconZoneOutline /></Btn>
              <HSep />
              <Btn><IconFpText /></Btn>
              <Btn><IconViaHide /></Btn>
              <Btn><IconTrackHide /></Btn>
              <HSep />
              <Btn active><IconLayers /></Btn>
              <Btn><IconTools /></Btn>
            </div>

            {/* canvas */}
            <div className="w-[1285px] shrink-0 bg-[#001023]">
              <Board />
            </div>

            {/* right toolbar */}
            <div className="w-[38px] shrink-0 flex flex-col pt-1 pl-px">
              <Btn active><IconPointer /></Btn>
              <Btn><IconPin /></Btn>
              <HSep />
              <Btn><IconFootprint /></Btn>
              <Btn tri><IconRoute /></Btn>
              <Btn tri><IconTune /></Btn>
              <Btn><IconVia /></Btn>
              <Btn><IconZoneSolid /></Btn>
              <Btn><IconRule /></Btn>
              <HSep />
              <Btn><IconLine /></Btn>
              <Btn><IconArc /></Btn>
              <Btn><IconRect /></Btn>
              <Btn><IconCircle /></Btn>
              <Btn><IconPoly /></Btn>
              <Btn><IconImage /></Btn>
              <Btn><IconT /></Btn>
              <Btn><IconTextBox /></Btn>
              <Btn tri><IconDim /></Btn>
              <Btn><IconDelete /></Btn>
              <HSep />
              <Btn tri><IconOrigin2 /></Btn>
              <Btn><IconMeasure /></Btn>
            </div>
          </div>

          {/* message panel */}
          <div className="h-[39px] shrink-0 flex pl-[13px] pt-[1px] text-[13.7px] font-semibold leading-[19px] text-[#ececec]">
            {stats.map(([label, value, w]) => (
              <div key={label} className={w}>
                <div className="whitespace-nowrap">{label}</div>
                <div>{value}</div>
              </div>
            ))}
          </div>
        </div>

        {/* appearance panel */}
        <div className="w-[562px] shrink-0 flex flex-col">
          <div className="h-[17px] shrink-0 ml-px bg-[#2f2f2f] pl-[3px] text-[11px] leading-[14px] text-[#dddddd]">Wygląd</div>
          <div className="h-[6px] shrink-0" />
          <div className="h-[36px] shrink-0 ml-[2px] bg-[#232323] flex pl-[4px] text-[13px] text-[#e4e4e4]">
            <div className="w-[77px] h-full flex items-center justify-center border-b-[3px] border-[#3584e4] pt-[5px]">Warstwy</div>
            <div className="ml-[20px] h-full flex items-center pt-[2px]">Obiekty</div>
            <div className="ml-[35px] h-full flex items-center pt-[2px]">Sieci</div>
          </div>
          <div className="h-[460px] shrink-0 ml-[2px] bg-[#4c4c4c] pt-[3px]">
            {layers.map(([name, color, on]) => (
              <div
                key={name}
                className={
                  name === "Edge.Cuts"
                    ? "relative h-[19px] flex items-center pl-[18px] bg-[#5a5a5a]"
                    : "relative h-[19px] flex items-center pl-[18px]"
                }
              >
                {name === "Edge.Cuts" && (
                  <svg viewBox="0 0 6 10" className="absolute left-[7px] top-[5px] w-[6px] h-[10px]">
                    <path d="M0 0l6 5-6 5z" fill="#3030d0" />
                  </svg>
                )}
                <div
                  className={
                    name === "F.Mask"
                      ? "w-4 h-[14px] border-l border-t border-[#8038b0]"
                      : name === "B.Mask"
                        ? "w-4 h-[14px] border-l border-t border-[#00a8a8]"
                        : "w-4 h-[14px]"
                  }
                  style={{ backgroundColor: color }}
                />
                <div className="ml-[6px]">
                  <Eye on={on} />
                </div>
                <span className="ml-[5px] text-[12.35px] font-semibold text-[#f2f2f2]">{name}</span>
              </div>
            ))}
          </div>
          <div className="h-[25px] shrink-0 ml-[2px] bg-[#1e1e1e] flex items-center pl-[12px] pt-[1px] text-[12.4px] font-semibold text-[#ececec]">
            <svg viewBox="0 0 5 9" className="w-[5px] h-[9px] mr-[3px]">
              <path d="M0 0l5 4.5L0 9z" fill="#f0f0f0" />
            </svg>
            Opcje wyświetlania warstw
          </div>

          <div className="h-[132px] shrink-0 flex flex-col pl-2 text-[12.35px] font-semibold text-[#e8e8e8]">
            <div className="mt-[8px] h-[18px] leading-[18px]">Ustawienia wstępne (Ctrl+Tab):</div>
            <div className="mt-[9px] h-[18px] pl-[13px] pr-[20px] flex items-center justify-between">
              <span>---</span>
              <Caret />
            </div>
            <div className="mt-[12px] h-[18px] leading-[18px]">Widoki (Shift+Tab):</div>
            <div className="mt-[9px] h-[18px] pl-[13px] pr-[20px] flex items-center justify-between">
              <span>---</span>
              <Caret />
            </div>
          </div>

          <div className="h-[17px] shrink-0 ml-px bg-[#2f2f2f] pl-[3px] text-[11px] leading-[14px] text-[#dddddd]">Filtr wyboru</div>
          <div className="pt-[5px] pl-[10px] flex">
            <div className="w-[156px] flex flex-col">
              <Check label="Wszystkie elementy" />
              <Check label="Footprinty" />
              <Check label="Ścieżki" />
              <Check label="Pola lutownicze" />
              <Check label="Strefy" />
              <Check label="Wymiary" />
            </div>
            <div className="flex flex-col">
              <Check label="Zablokowane elementy" on={false} />
              <Check label="Tekst" />
              <Check label="Przelotki" />
              <Check label="Grafika" />
              <Check label="Strefy z regułami" />
              <Check label="Pozostałe elementy" />
            </div>
          </div>
        </div>
      </div>

      {/* status bar */}
      <div className="h-6 shrink-0 bg-[#242424] flex items-center pt-[2px] text-[13.7px] font-semibold text-[#ececec] whitespace-nowrap">
        <div className="w-[525px] pl-[5px]">Plik '/home/niebieskirekin/Dokumenty/KiCad/RobotASK/Photoresistor-arr...</div>
        <div className="w-[83px]">Z 2,87</div>
        <div className="w-[189px]">X 167,6400&nbsp; Y 33,0200</div>
        <div className="w-[300px]">dx 167,6400&nbsp; dy 33,0200&nbsp; dist 170,8610</div>
        <div className="w-[216px]">grid X 2,5400&nbsp; Y 2,5400</div>
        <div className="w-[49px]">mm</div>
        <div className="pl-[1px] text-[13.9px]">Zaznacz element(y)</div>
      </div>
    </div>
  );
}
